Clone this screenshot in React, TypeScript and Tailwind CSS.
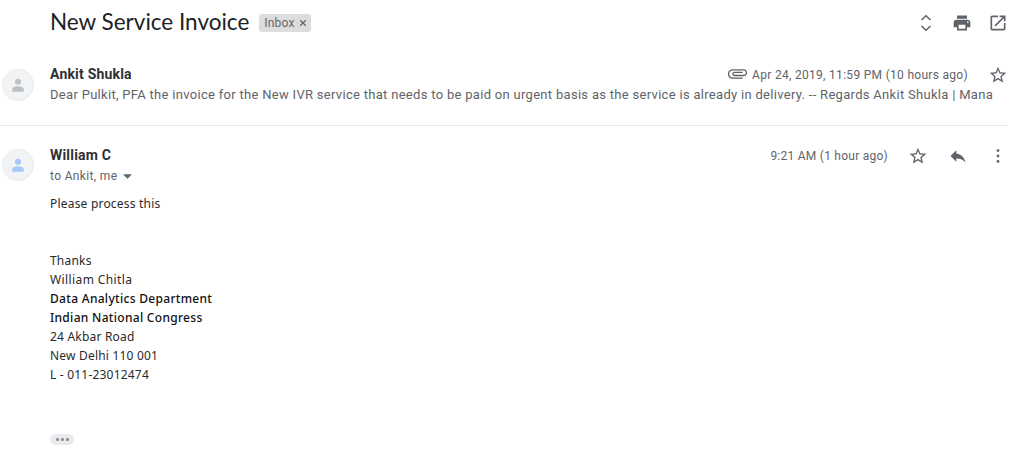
const Star = ({ className = "" }: { className?: string }) => (
  <svg viewBox="0 0 24 24" width="20" height="20" fill="#5f6368" className={className}>
    <path d="M22 9.24l-7.19-.62L12 2 9.19 8.63 2 9.24l5.46 4.73L5.82 21 12 17.27 18.18 21l-1.63-7.03L22 9.24zM12 15.4l-3.76 2.27 1-4.28-3.32-2.88 4.38-.38L12 6.1l1.71 4.04 4.38.38-3.32 2.88 1 4.28L12 15.4z" />
  </svg>
);

const Avatar = ({ color, className = "" }: { color: string; className?: string }) => (
  <div className={"w-[32px] h-[32px] rounded-full bg-[#f1f3f4] border border-[#e8eaed] flex items-center justify-center shrink-0 " + className}>
    <svg viewBox="0 0 24 24" width="20" height="20" fill={color}>
      <circle cx="12" cy="8" r="3.6" />
      <path d="M12 13.6c-3.2 0-7 1.5-7 3.8V20h14v-2.6c0-2.3-3.8-3.8-7-3.8z" />
    </svg>
  </div>
);

export default function App() {
  return (
    <div className="w-[1023px] h-[467px] overflow-hidden bg-white font-['Roboto',sans-serif] text-[#222]">
      {/* Subject */}
      <div className="flex items-center h-[46px] pl-[50px] pr-[15px]">
        <h1 className="text-[22.5px] leading-[28px] mb-[2px] text-[#202124] font-['Lato',sans-serif] font-normal">New Service Invoice</h1>
        <span className="ml-[10px] mb-[1px] h-[18px] flex items-center gap-[4px] rounded-[3px] bg-[#dddddd] pl-[5px] pr-[4px] text-[12px] tracking-[0.2px] text-[#666]">
          Inbox
          <svg viewBox="0 0 10 10" width="8" height="8" stroke="#666" strokeWidth="1.6"><path d="M1.5 1.5l7 7M8.5 1.5l-7 7" /></svg>
        </span>
        <div className="ml-auto flex items-center gap-[16px]">
          <svg viewBox="0 0 20 20" width="20" height="20" fill="none" stroke="#5f6368" strokeWidth="1.5"><path d="M5.5 7L10 2.8 14.5 7M5.5 13L10 17.2 14.5 13" /></svg>
          <svg viewBox="0 0 24 24" width="20" height="20" fill="#5f6368"><path d="M19 8H5c-1.66 0-3 1.34-3 3v6h4v4h12v-4h4v-6c0-1.66-1.34-3-3-3zm-3 11H8v-5h8v5zm3-7c-.55 0-1-.45-1-1s.45-1 1-1 1 .45 1 1-.45 1-1 1zm-1-9H6v4h12V3z" /></svg>
          <svg viewBox="0 0 24 24" width="20" height="20" fill="#5f6368"><path d="M19 19H5V5h7V3H5c-1.11 0-2 .9-2 2v14c0 1.1.89 2 2 2h14c1.1 0 2-.9 2-2v-7h-2v7zM14 3v2h3.59l-9.83 9.83 1.41 1.41L19 6.41V10h2V3h-7z" /></svg>
        </div>
      </div>

      {/* Collapsed message */}
      <div className="flex h-[80px] border-b border-[#e6e6e6] w-[1008px] pl-[2px] pt-[19px]">
        <Avatar color="#bdc1c6" className="mt-[4px]" />
        <div className="ml-[16px] flex-1 min-w-0">
          <div className="flex items-center h-[19px]">
            <span className="text-[14px] tracking-[0.2px] font-bold text-[#2f3033]">Ankit Shukla</span>
            <div className="ml-auto flex items-center">
              <svg viewBox="0 0 24 24" width="21" height="21" fill="#5f6368" className="mr-[4px] mb-[2px] -my-[1px] rotate-90">
                <path d="M16.5 6v11.5c0 2.21-1.79 4-4 4s-4-1.79-4-4V5c0-1.38 1.12-2.5 2.5-2.5s2.5 1.12 2.5 2.5v10.5c0 .55-.45 1-1 1s-1-.45-1-1V6H10v9.5c0 1.38 1.12 2.5 2.5 2.5s2.5-1.12 2.5-2.5V5c0-2.21-1.79-4-4-4S7 2.79 7 5v12.5c0 3.04 2.46 5.5 5.5 5.5s5.5-2.46 5.5-5.5V6h-1.5z" />
              </svg>
              <span className="text-[12px] tracking-[0.3px] text-[#5f6368]">Apr 24, 2019, 11:59 PM (10 hours ago)</span>
              <Star className="ml-[20px]" />
            </div>
          </div>
          <div className="text-[13px] tracking-[0.3px] leading-[20px] text-[#5f6368] whitespace-nowrap overflow-hidden w-[943px] mt-[1px]">
            Dear Pulkit, PFA the invoice for the New IVR service that needs to be paid on urgent basis as the service is already in delivery. -- Regards Ankit Shukla | Mana
          </div>
        </div>
      </div>

      {/* Expanded message */}
      <div className="flex pl-[2px] pt-[20px] w-[1008px]">
        <Avatar color="#a8c7fa" className="mt-[3px]" />
        <div className="ml-[16px] flex-1 min-w-0">
          <div className="flex items-center h-[19px]">
            <span className="text-[14px] tracking-[0.2px] font-bold text-[#2f3033]">William C</span>
            <div className="ml-auto flex items-center">
              <span className="text-[12px] tracking-[0.25px] text-[#5f6368]">9:21 AM (1 hour ago)</span>
              <Star className="ml-[20px]" />
              <svg viewBox="0 0 24 24" width="20" height="20" fill="#5f6368" className="ml-[20px]"><path d="M10 9V5l-7 7 7 7v-4.1c5 0 8.5 1.6 11 5.1-1-5-4-10-11-11z" /></svg>
              <svg viewBox="0 0 24 24" width="20" height="20" fill="#5f6368" className="ml-[20px]"><circle cx="12" cy="5.5" r="1.7" /><circle cx="12" cy="12" r="1.7" /><circle cx="12" cy="18.5" r="1.7" /></svg>
            </div>
          </div>
          <div className="flex items-center h-[20px] mt-[1px] text-[12px] tracking-[0.35px] text-[#5f6368]">
            to Ankit, me
            <svg viewBox="0 0 10 5" width="9" height="5" fill="#5f6368" className="ml-[6px]"><path d="M0 0h10L5 5z" /></svg>
          </div>
          <div className="mt-[8px] font-['Noto_Sans',sans-serif] text-[12px] tracking-[0.2px] leading-[19px] text-[#2a2a2a]">
            <p>Please process this</p>
            <div className="h-[38px]" />
            <p>Thanks</p>
            <p className="tracking-[0.4px]">William Chitla</p>
            <p className="font-medium tracking-[0.3px] text-[#111]">Data Analytics Department</p>
            <p className="font-medium tracking-[0.3px] text-[#111]">Indian National Congress</p>
            <p>24 Akbar Road</p>
            <p>New Delhi 110 001</p>
            <p>L - 011-23012474</p>
          </div>
          <div className="mt-[50px] w-[24px] h-[11px] rounded-full bg-[#e8eaed] flex items-center justify-center gap-[2px]">
            <span className="w-[3px] h-[3px] rounded-full bg-[#80868b]" />
            <span className="w-[3px] h-[3px] rounded-full bg-[#80868b]" />
            <span className="w-[3px] h-[3px] rounded-full bg-[#80868b]" />
          </div>
        </div>
      </div>
    </div>
  );
}
